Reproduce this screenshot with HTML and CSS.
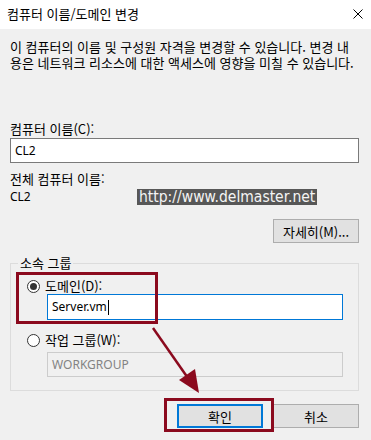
FILE: index.html
```html
<!DOCTYPE html>
<html lang="ko">
<head>
  <meta charset="UTF-8" />
  <title>컴퓨터 이름/도메인 변경</title>
  <link rel="stylesheet" href="styles.css">
</head>
<body>
<div class="dialog">
  <div class="titlebar">
    <span class="title">컴퓨터 이름/도메인 변경</span>
    <svg class="close" width="10" height="10" viewBox="0 0 10 10">
      <path d="M0.5 0.5 L9.5 9.5 M9.5 0.5 L0.5 9.5" stroke="#000" stroke-width="1" fill="none"/>
    </svg>
  </div>

  <div class="content">
    <p class="desc">이 컴퓨터의 이름 및 구성원 자격을 변경할 수 있습니다. 변경 내<br>용은 네트워크 리소스에 대한 액세스에 영향을 미칠 수 있습니다.</p>

    <label class="label first" for="compName">컴퓨터 이름(C):</label>
    <input class="field" type="text" id="compName" value="CL2" />

    <div class="label">전체 컴퓨터 이름:</div>
    <div class="fullname">
      <span>CL2</span>
      <span class="watermark">http://www.delmaster.net</span>
    </div>

    <div class="more-row">
      <button class="btn">자세히(M)...</button>
    </div>

    <div class="group">
      <div class="group-title">소속 그룹</div>
      <div class="radio-row first-radio">
        <span class="radio checked"></span>
        <span>도메인(D):</span>
      </div>
      <div class="field focus">Server.vm<span class="caret"></span></div>
      <div class="radio-row second-radio">
        <span class="radio"></span>
        <span>작업 그룹(W):</span>
      </div>
      <div class="field disabled">WORKGROUP</div>
    </div>

    <div class="actions">
      <button class="btn default">확인</button>
      <button class="btn">취소</button>
    </div>
  </div>

  <div class="mark mark-domain"></div>
  <div class="mark mark-ok"></div>
  <svg class="arrow" width="371" height="440" viewBox="0 0 371 440">
    <path d="M153 328 L190 381" stroke="#8b0a1e" stroke-width="2.5" fill="none"/>
    <polygon points="199,393 179,380 195,369" fill="#8b0a1e"/>
  </svg>
</div>
</body>
</html>
```

FILE: styles.css
```css
body {
  margin: 0;
  background: #f0f0f0;
}
.dialog {
  position: relative;
  width: 371px;
  height: 440px;
  background: #f0f0f0;
  font-family: "Noto Sans CJK KR", "Noto Sans", sans-serif;
  font-size: 13px;
  line-height: 16px;
  color: #000;
  overflow: hidden;
}
.titlebar {
  height: 27px;
  background: #fff;
  display: flex;
  align-items: center;
  justify-content: space-between;
  padding: 0 8px 2px 7px;
}
.content {
  padding: 0 12px 0 10px;
}
.desc {
  margin: 10px 0 0;
}
.label {
  display: block;
}
.label.first {
  margin-top: 50px;
}
.field {
  display: block;
  box-sizing: border-box;
  width: 100%;
  height: 25px;
  margin: 1px 0 8px;
  padding: 0 4px;
  border: 1px solid #7a7a7a;
  background: #fff;
  font-family: "Noto Sans", "Noto Sans CJK KR", sans-serif;
  font-size: 12px;
  line-height: 23px;
  color: #000;
  outline: none;
}
.fullname {
  position: relative;
  margin-top: 2px;
  height: 16px;
  font-family: "Noto Sans", sans-serif;
  font-size: 12px;
}
.watermark {
  position: absolute;
  left: 127px;
  top: 0;
  height: 16px;
  padding: 0 2px;
  background: #575757;
  color: #f4f4f4;
  font-family: "DejaVu Sans Condensed", "DejaVu Sans", sans-serif;
  font-size: 15.5px;
  line-height: 16px;
  white-space: nowrap;
}
.more-row {
  display: flex;
  justify-content: flex-end;
  margin-top: 14px;
}
.btn {
  box-sizing: border-box;
  width: 86px;
  height: 24px;
  border: 1px solid #adadad;
  background: #e1e1e1;
  font-family: "Noto Sans CJK KR", "Noto Sans", sans-serif;
  font-size: 13px;
  color: #000;
  padding: 0;
}
.btn.default {
  border: 2px solid #0078d7;
}
.group {
  margin-top: 20px;
  border: 1px solid #dcdcdc;
  padding: 0 15px 13px 36px;
}
.group-title {
  width: fit-content;
  height: 16px;
  margin: -9px 0 0 -29px;
  padding: 0 2px;
  background: #f0f0f0;
}
.radio-row {
  display: flex;
  align-items: center;
  gap: 5px;
  height: 16px;
  margin-left: -20px;
}
.first-radio {
  margin-top: 7px;
}
.second-radio {
  margin-top: 12px;
}
.radio {
  box-sizing: border-box;
  width: 13px;
  height: 13px;
  border: 1px solid #333;
  border-radius: 50%;
  background: #fff;
  display: flex;
  align-items: center;
  justify-content: center;
}
.radio.checked::after {
  content: "";
  width: 7px;
  height: 7px;
  border-radius: 50%;
  background: #333;
}
.group .field {
  margin: 0;
}
.field.focus {
  height: 26px;
  border-color: #0078d7;
  line-height: 24px;
}
.caret {
  display: inline-block;
  width: 1px;
  height: 15px;
  margin-left: 1px;
  background: #000;
  vertical-align: middle;
}
.group .field.disabled {
  margin-top: 4px;
  border-color: #cccccc;
  background: #f0f0f0;
  color: #838383;
}
.actions {
  display: flex;
  justify-content: flex-end;
  gap: 10px;
  margin-top: 13px;
}
.mark {
  position: absolute;
  box-sizing: border-box;
  border: 3px solid #8b0a1e;
}
.mark-domain {
  left: 16px;
  top: 272px;
  width: 142px;
  height: 52px;
}
.mark-ok {
  left: 164px;
  top: 398px;
  width: 110px;
  height: 34px;
}
.arrow {
  position: absolute;
  left: 0;
  top: 0;
  pointer-events: none;
}
```
